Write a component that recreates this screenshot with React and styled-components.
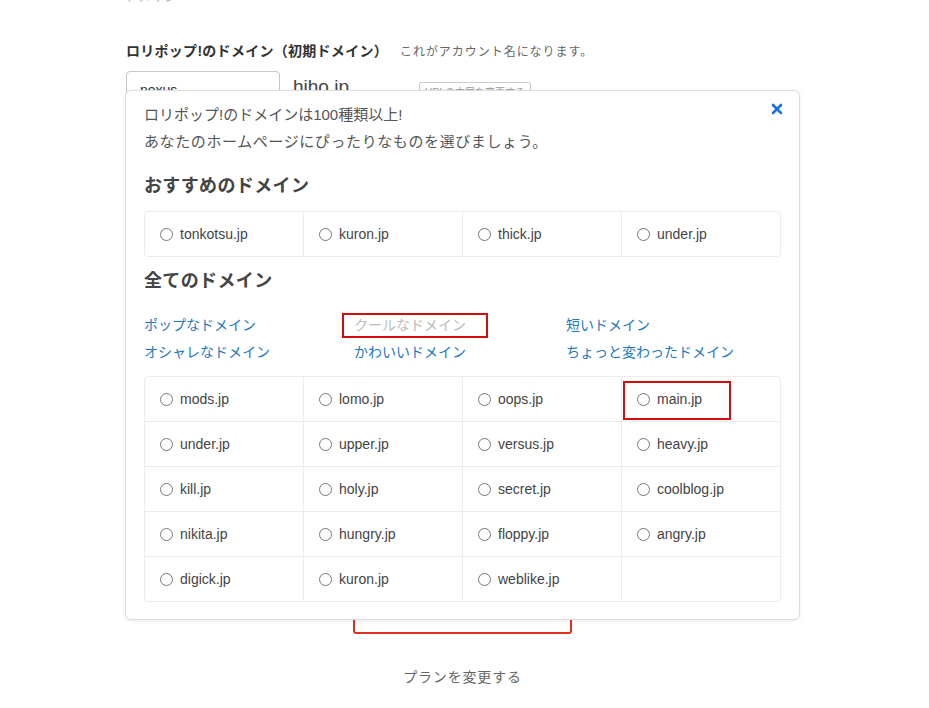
import React from 'react';
import styled, { createGlobalStyle, css } from 'styled-components';

const GlobalStyle = createGlobalStyle`
  body {
    margin: 0;
    background: #fff;
    font-family: "Liberation Sans", "Noto Sans CJK JP", sans-serif;
    color: #555;
  }
`;

const Page = styled.div`
  position: relative;
  display: flow-root;
  width: 675px;
  margin-left: 125px;
  padding-bottom: 20px;
`;

const StepCaption = styled.div`
  margin-top: -13px;
  font-size: 13px;
  line-height: 20px;
  color: #bbb;
`;

const FieldLabel = styled.div`
  margin-top: 34px;
  display: flex;
  align-items: baseline;
  gap: 12px;
  padding-left: 1px;
  line-height: 20px;
`;

const LabelMain = styled.span`
  font-size: 14px;
  font-weight: bold;
  color: #333;
  letter-spacing: 0.02em;
`;

const LabelNote = styled.span`
  font-size: 12px;
  color: #666;
  letter-spacing: 0.08em;
`;

const InputRow = styled.div`
  margin-top: 9px;
  display: flex;
  align-items: flex-start;
  padding-left: 1px;
`;

const TextInput = styled.div`
  width: 126px;
  height: 36px;
  padding: 0 13px;
  border: 1px solid #c8c8c8;
  border-radius: 4px;
  font-size: 14px;
  line-height: 36px;
  color: #333;
`;

const DomainSuffix = styled.span`
  margin-left: 13px;
  margin-top: 5px;
  font-size: 19px;
  color: #444;
`;

const SmallButton = styled.span`
  margin-left: 70px;
  margin-top: 11px;
  padding: 1px 5px;
  border: 1px solid #ccc;
  border-radius: 2px;
  font-size: 10px;
  color: #999;
`;

const PlanButton = styled.div`
  margin: 473px auto 0;
  width: 215px;
  height: 48px;
  border: 2px solid #e0301e;
  border-radius: 3px;
`;

const PlanLink = styled.div`
  margin-top: 33px;
  text-align: center;
  font-size: 14px;
  line-height: 20px;
  letter-spacing: 0.06em;
  color: #666;
`;

/* domain picker popover */
const Popover = styled.div`
  position: absolute;
  top: 90px;
  left: 0;
  width: 637px;
  padding: 10px 18px 17px;
  background: #fff;
  border: 1px solid #ddd;
  border-radius: 6px;
  box-shadow: 0 1px 4px rgba(0, 0, 0, 0.08);
`;

const CloseButton = styled.button`
  position: absolute;
  top: 12px;
  right: 16px;
  width: 12px;
  height: 12px;
  padding: 0;
  border: none;
  background: none;
  cursor: pointer;
  display: flex;
`;

const Lead = styled.p`
  margin: 0;
  font-size: 15px;
  line-height: 27px;
  letter-spacing: ${({ $tight }) => ($tight ? '0' : '0.04em')};
  color: #555;
`;

const SectionTitle = styled.h3`
  margin: ${({ $top }) => $top}px 0 0;
  font-size: 18px;
  line-height: 27px;
  font-weight: bold;
  color: #444;
  letter-spacing: 0.02em;
`;

const DomainGrid = styled.div`
  margin-top: ${({ $top }) => $top}px;
  display: grid;
  grid-template-columns: repeat(4, 1fr);
  gap: 1px;
  background: #ececec;
  border: 1px solid #ececec;
  border-radius: 4px;
  overflow: hidden;
`;

const DomainCell = styled.label`
  position: relative;
  height: 44px;
  display: flex;
  align-items: center;
  gap: 7px;
  padding-left: 15px;
  background: #fff;
  font-size: 14px;
  color: #444;
  cursor: pointer;

  ${({ $marked }) =>
    $marked &&
    css`
      &::after {
        content: '';
        position: absolute;
        left: 1px;
        top: 4px;
        width: 104px;
        height: 35px;
        border: 2px solid #d40c0c;
      }
    `}
`;

const Radio = styled.span`
  width: 11px;
  height: 11px;
  border: 1px solid #777;
  border-radius: 50%;
  flex-shrink: 0;
`;

const CategoryList = styled.div`
  margin-top: 17px;
  display: grid;
  grid-template-columns: 210px 212px 1fr;
`;

const CategoryLink = styled.a`
  position: relative;
  justify-self: start;
  font-size: 14px;
  line-height: 27px;
  text-decoration: none;
  color: ${({ $active }) => ($active ? '#bbb' : '#1f78c1')};
  cursor: pointer;

  ${({ $active }) =>
    $active &&
    css`
      &::after {
        content: '';
        position: absolute;
        left: -12px;
        right: -22px;
        top: 1px;
        bottom: 1px;
        border: 2px solid #d40c0c;
      }
    `}
`;

const featured = ['tonkotsu.jp', 'kuron.jp', 'thick.jp', 'under.jp'];

const categories = [
  { name: 'ポップなドメイン' },
  { name: 'クールなドメイン', active: true },
  { name: '短いドメイン' },
  { name: 'オシャレなドメイン' },
  { name: 'かわいいドメイン' },
  { name: 'ちょっと変わったドメイン' },
];

const allDomains = [
  'mods.jp', 'lomo.jp', 'oops.jp', 'main.jp',
  'under.jp', 'upper.jp', 'versus.jp', 'heavy.jp',
  'kill.jp', 'holy.jp', 'secret.jp', 'coolblog.jp',
  'nikita.jp', 'hungry.jp', 'floppy.jp', 'angry.jp',
  'digick.jp', 'kuron.jp', 'weblike.jp', null,
];

function DomainOption({ name, marked }) {
  if (!name) return <DomainCell as="div" />;
  return (
    <DomainCell $marked={marked}>
      <Radio />
      {name}
    </DomainCell>
  );
}

export default function App() {
  return (
    <>
      <GlobalStyle />
      <Page>
        <StepCaption>ドメイン</StepCaption>
        <FieldLabel>
          <LabelMain>ロリポップ!のドメイン（初期ドメイン）</LabelMain>
          <LabelNote>これがアカウント名になります。</LabelNote>
        </FieldLabel>
        <InputRow>
          <TextInput>nexus</TextInput>
          <DomainSuffix>hiho.jp</DomainSuffix>
          <SmallButton>URLの末尾を変更する</SmallButton>
        </InputRow>
        <PlanButton />
        <PlanLink>プランを変更する</PlanLink>

        <Popover>
          <CloseButton aria-label="閉じる">
            <svg width="12" height="12" viewBox="0 0 12 12">
              <path d="M2 2L10 10M10 2L2 10" stroke="#1a74d6" strokeWidth="2.6" strokeLinecap="round" />
            </svg>
          </CloseButton>
          <Lead $tight>ロリポップ!のドメインは100種類以上!</Lead>
          <Lead>あなたのホームページにぴったりなものを選びましょう。</Lead>

          <SectionTitle $top={18}>おすすめのドメイン</SectionTitle>
          <DomainGrid $top={11}>
            {featured.map((d) => (
              <DomainOption key={d} name={d} />
            ))}
          </DomainGrid>

          <SectionTitle $top={11}>全てのドメイン</SectionTitle>
          <CategoryList>
            {categories.map((c) => (
              <CategoryLink key={c.name} $active={c.active}>
                {c.name}
              </CategoryLink>
            ))}
          </CategoryList>
          <DomainGrid $top={10}>
            {allDomains.map((d, i) => (
              <DomainOption key={i} name={d} marked={d === 'main.jp'} />
            ))}
          </DomainGrid>
        </Popover>
      </Page>
    </>
  );
}
